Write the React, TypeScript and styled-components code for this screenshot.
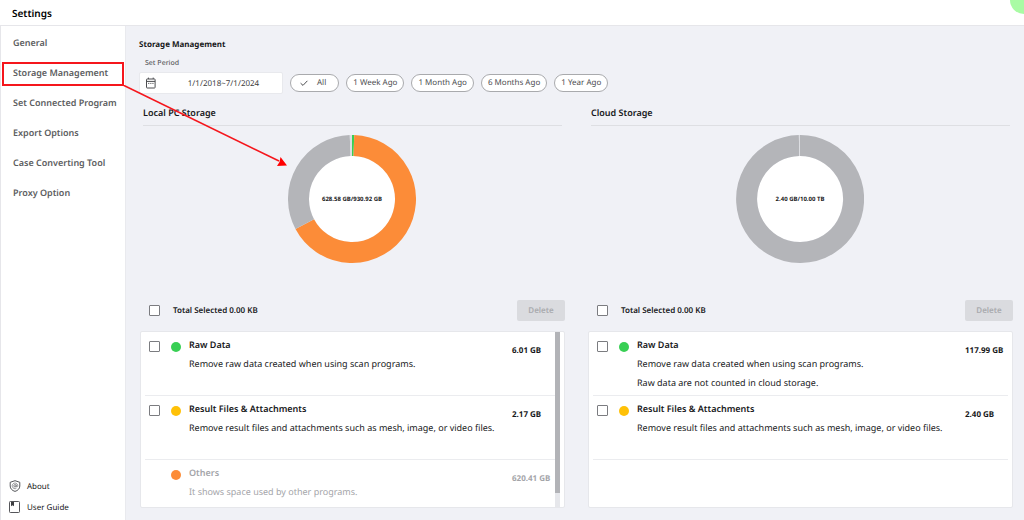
import React from "react";
import styled, { createGlobalStyle, css } from "styled-components";

const GlobalStyle = createGlobalStyle`
  *, *::before, *::after { box-sizing: border-box; }
  body {
    margin: 0;
    background: #f0f1f6;
    color: #17181a;
    font-family: "Noto Sans", sans-serif;
    font-size: 8px;
    text-rendering: geometricPrecision;
  }
  button, input { font: inherit; color: inherit; text-rendering: inherit; }
  h1, h2, h3, p, ul { margin: 0; padding: 0; }
`;

const Page = styled.div`
  min-height: 100vh;
  display: flex;
  flex-direction: column;
  position: relative;
  overflow: hidden;
`;

const Header = styled.header`
  height: 26px;
  padding: 0 12px;
  display: flex;
  align-items: center;
  background: #fff;
  border-bottom: 1px solid #e6e6ea;
`;

const PageTitle = styled.h1`
  font-size: 10px;
  line-height: 16px;
  font-weight: 600;
  color: #000;
`;

const Bubble = styled.span`
  position: absolute;
  top: -14px;
  right: -14px;
  width: 28px;
  height: 28px;
  border-radius: 50%;
  background: #a9fba4;
`;

const Body = styled.div`
  flex: 1;
  display: flex;
`;

const Sidebar = styled.aside`
  flex: 0 0 126px;
  display: flex;
  flex-direction: column;
  justify-content: space-between;
  padding: 2px 0;
  background: #fff;
  border-left: 1px solid #e6e6ea;
  border-right: 1px solid #e9eaee;
`;

const NavList = styled.ul`
  list-style: none;
`;

const NavItem = styled.li`
  position: relative;
  height: 30px;
  display: flex;
  align-items: center;
  padding-left: 12px;
`;

const NavLink = styled.a`
  font-size: 9px;
  line-height: 16px;
  font-weight: 600;
  color: #5c5d60;
  text-decoration: none;
  white-space: nowrap;
`;

const Marker = styled.span`
  position: absolute;
  z-index: 2;
  top: 4px;
  left: 1px;
  right: 1px;
  height: 24px;
  border: 2px solid #f5161c;
`;

const Pointer = styled.svg`
  position: absolute;
  z-index: 3;
  top: 27px;
  left: 121px;
  width: 168px;
  height: 86px;
  pointer-events: none;
`;

const FooterList = styled.ul`
  list-style: none;
  display: flex;
  flex-direction: column;
  gap: 5px;
  padding: 0 0 3px 8px;
`;

const FooterLink = styled.a`
  display: flex;
  align-items: center;
  gap: 6px;
  height: 16px;
  font-size: 8px;
  font-weight: 400;
  color: #17181a;
  text-decoration: none;

  svg { width: 12px; height: 12px; }
`;

const Main = styled.main`
  flex: 1;
  min-width: 0;
  display: flex;
  flex-direction: column;
  padding: 11px 11px 12px 13px;
`;

const SectionTitle = styled.h2`
  font-size: 8px;
  line-height: 16px;
  font-weight: 700;
`;

const PeriodLabel = styled.label`
  margin-top: 5px;
  padding-left: 6px;
  font-size: 7px;
  line-height: 12px;
  font-weight: 500;
  color: #5c5d60;
`;

const PeriodRow = styled.div`
  margin-top: 2px;
  display: flex;
  align-items: center;
  gap: 7px;
`;

const DateField = styled.div`
  width: 144px;
  height: 22px;
  display: flex;
  align-items: center;
  padding-left: 5px;
  background: #fff;
  border: 1px solid #e8e9ed;
  border-radius: 2px;

  svg { flex: none; width: 12px; height: 12px; }
`;

const DateInput = styled.input`
  flex: 1;
  min-width: 0;
  height: 16px;
  padding: 0 0 0 8px;
  border: 0;
  outline: 0;
  background: transparent;
  text-align: center;
  font-size: 8px;
  color: #3c3d40;
`;

const Chip = styled.button`
  height: 18px;
  display: inline-flex;
  align-items: center;
  gap: 8px;
  padding: 0 6px;
  background: #fff;
  border: 1px solid #a9aaad;
  border-radius: 9px;
  font-size: 8px;
  line-height: 16px;
  color: #4c4d50;
  white-space: nowrap;

  &[aria-pressed="true"] { padding: 0 12px 0 8px; }
  svg { width: 10px; height: 10px; }
`;

const Columns = styled.div`
  flex: 1;
  display: grid;
  grid-template-columns: 1fr 1fr;
  gap: 23px;
  margin-top: 10px;
  padding-left: 1px;
`;

const Column = styled.section`
  min-width: 0;
  display: flex;
  flex-direction: column;
`;

const StorageTitle = styled.h3`
  margin: 0 3px;
  padding-bottom: 4px;
  border-bottom: 1px solid #dedfe3;
  font-size: 9px;
  line-height: 17px;
  font-weight: 600;
`;

const Donut = styled.svg`
  align-self: center;
  width: 128px;
  height: 128px;
  margin: 9px 2px 0 0;

  text {
    font-size: 6px;
    font-weight: 700;
    text-anchor: middle;
    fill: #17181a;
  }
`;

const Actions = styled.div`
  margin-top: 37px;
  display: flex;
  align-items: center;
  justify-content: space-between;
  padding-left: 9px;
`;

const SelectAll = styled.label`
  display: flex;
  align-items: center;
  gap: 13px;
  font-size: 8px;
  line-height: 16px;
  font-weight: 600;
`;

const Checkbox = styled.input.attrs({ type: "checkbox" })`
  appearance: none;
  flex: none;
  width: 11px;
  height: 11px;
  margin: 0;
  background: #fff;
  border: 1px solid #7b7c80;
  border-radius: 1px;

  &:checked { background: #7b7c80; }
`;

const DeleteButton = styled.button`
  width: 48px;
  height: 21px;
  padding: 0;
  border: 0;
  border-radius: 2px;
  background: #dadbdf;
  font-size: 8px;
  font-weight: 600;
  color: #a9aaae;
`;

const Card = styled.div`
  flex: 1;
  margin-top: 10px;
  display: flex;
  padding: 0 4px;
  background: #fff;
  border: 1px solid #e6e7eb;
  border-radius: 2px;
`;

const Rows = styled.ul`
  flex: 1;
  min-width: 0;
  list-style: none;
`;

const Row = styled.li<{ $muted?: boolean }>`
  display: grid;
  grid-template-columns: 11px 10px 1fr 43px;
  column-gap: 11px;
  align-items: start;
  min-height: 64px;
  padding: 3px 0 0 4px;
  border-bottom: 1px solid #ebecef;

  ${(p) =>
    p.$muted &&
    css`
      min-height: 47px;
      border-bottom: 0;
      color: #a4a5a9;
    `}
`;

const RowCheck = styled(Checkbox)`
  margin-top: 6px;
`;

const Dot = styled.span<{ $color: string }>`
  grid-column: 2;
  width: 10px;
  height: 10px;
  margin-top: 7px;
  border-radius: 50%;
  background: ${(p) => p.$color};
`;

const RowText = styled.div`
  margin-left: -3px;
  line-height: 19px;
  white-space: nowrap;
`;

const RowTitle = styled.label`
  display: block;
  font-size: 9px;
  font-weight: 600;
`;

const RowLine = styled.p`
  font-size: 9px;
`;

const Size = styled.span`
  padding-top: 6px;
  font-size: 8px;
  line-height: 19px;
  font-weight: 700;
  white-space: nowrap;
`;

const ScrollTrack = styled.div`
  flex: none;
  width: 5px;
  background: #e6e7eb;
`;

const ScrollThumb = styled.div`
  height: 92%;
  background: #b2b3b7;
`;

type Slice = { color: string; from: number; to: number };
type Item = { title: string; lines: string[]; size: string; color: string; muted?: boolean };
type Storage = { id: string; title: string; usage: string; slices: Slice[]; items: Item[]; scroll?: boolean };

const GREEN = "#38cf54";
const YELLOW = "#ffc107";
const ORANGE = "#fc8c38";
const GRAY = "#b4b5b9";
const LIGHT = "#dcdde1";

const storages: Storage[] = [
  {
    id: "local",
    title: "Local PC Storage",
    usage: "628.58 GB/930.92 GB",
    scroll: true,
    slices: [
      { color: GREEN, from: 0, to: 2 },
      { color: ORANGE, from: 2, to: 242 },
      { color: GRAY, from: 242, to: 358 },
      { color: LIGHT, from: 358, to: 360 },
    ],
    items: [
      { title: "Raw Data", lines: ["Remove raw data created when using scan programs."], size: "6.01 GB", color: GREEN },
      {
        title: "Result Files & Attachments",
        lines: ["Remove result files and attachments such as mesh, image, or video files."],
        size: "2.17 GB",
        color: YELLOW,
      },
      { title: "Others", lines: ["It shows space used by other programs."], size: "620.41 GB", color: ORANGE, muted: true },
    ],
  },
  {
    id: "cloud",
    title: "Cloud Storage",
    usage: "2.40 GB/10.00 TB",
    slices: [
      { color: GRAY, from: 0, to: 359 },
      { color: LIGHT, from: 359, to: 360 },
    ],
    items: [
      {
        title: "Raw Data",
        lines: ["Remove raw data created when using scan programs.", "Raw data are not counted in cloud storage."],
        size: "117.99 GB",
        color: GREEN,
      },
      {
        title: "Result Files & Attachments",
        lines: ["Remove result files and attachments such as mesh, image, or video files."],
        size: "2.40 GB",
        color: YELLOW,
      },
    ],
  },
];

const navItems = [
  "General",
  "Storage Management",
  "Set Connected Program",
  "Export Options",
  "Case Converting Tool",
  "Proxy Option",
];

const periods = ["1 Week Ago", "1 Month Ago", "6 Months Ago", "1 Year Ago"];

function arc({ from, to }: Slice) {
  const r = 53.5;
  const point = (deg: number) => {
    const a = ((deg - 90) * Math.PI) / 180;
    return `${(64 + r * Math.cos(a)).toFixed(2)} ${(64 + r * Math.sin(a)).toFixed(2)}`;
  };
  return `M${point(from)} A${r} ${r} 0 ${to - from > 180 ? 1 : 0} 1 ${point(to)}`;
}

function StorageColumn({ storage }: { storage: Storage }) {
  return (
    <Column>
      <StorageTitle>{storage.title}</StorageTitle>
      <Donut viewBox="0 0 128 128" role="img" aria-label={storage.usage}>
        <circle cx="64" cy="64" r="43" fill="#fff" />
        {storage.slices.map((s) => (
          <path key={s.from} d={arc(s)} fill="none" stroke={s.color} strokeWidth="21" />
        ))}
        <text x="64" y="66">{storage.usage}</text>
      </Donut>
      <Actions>
        <SelectAll>
          <Checkbox />
          Total Selected 0.00 KB
        </SelectAll>
        <DeleteButton type="button" disabled>Delete</DeleteButton>
      </Actions>
      <Card>
        <Rows>
          {storage.items.map((item, i) => {
            const id = `${storage.id}-${i}`;
            return (
              <Row key={id} $muted={item.muted}>
                {!item.muted && <RowCheck id={id} />}
                <Dot $color={item.color} />
                <RowText>
                  <RowTitle as={item.muted ? "span" : "label"} htmlFor={item.muted ? undefined : id}>
                    {item.title}
                  </RowTitle>
                  {item.lines.map((line) => (
                    <RowLine key={line}>{line}</RowLine>
                  ))}
                </RowText>
                <Size>{item.size}</Size>
              </Row>
            );
          })}
        </Rows>
        {storage.scroll && (
          <ScrollTrack>
            <ScrollThumb />
          </ScrollTrack>
        )}
      </Card>
    </Column>
  );
}

export default function App() {
  return (
    <Page>
      <GlobalStyle />
      <Header>
        <PageTitle>Settings</PageTitle>
      </Header>
      <Bubble />
      <Body>
        <Sidebar>
          <nav>
            <NavList>
              {navItems.map((name) => (
                <NavItem key={name}>
                  <NavLink href="#">{name}</NavLink>
                  {name === "Storage Management" && (
                    <>
                      <Marker />
                      <Pointer viewBox="0 0 168 86" aria-hidden="true">
                        <path d="M1 0 L157 76" stroke="#f5161c" strokeWidth="1.6" fill="none" />
                        <path d="M165 80.5 L155 81 L157.5 77 L158.5 72 Z" fill="#ff0000" />
                      </Pointer>
                    </>
                  )}
                </NavItem>
              ))}
            </NavList>
          </nav>
          <FooterList>
            <li>
              <FooterLink href="#">
                <svg viewBox="0 0 12 12" fill="none" stroke="#55565a" strokeWidth="1" aria-hidden="true">
                  <path d="M6 .7 L10.8 2.3 V6 C10.8 8.7 8.8 10.6 6 11.4 C3.2 10.6 1.2 8.7 1.2 6 V2.3 Z" />
                  <circle cx="6" cy="5.8" r="1.2" strokeWidth=".7" />
                  <path d="M7.2 4.6 V6.3 C7.2 7.3 8.8 7.2 8.8 5.8 A2.8 2.8 0 1 0 7.4 8.3" strokeWidth=".6" />
                </svg>
                About
              </FooterLink>
            </li>
            <li>
              <FooterLink href="#">
                <svg viewBox="0 0 12 12" fill="none" stroke="#55565a" strokeWidth="1" aria-hidden="true">
                  <rect x=".5" y=".5" width="10" height="11" rx=".8" />
                  <path d="M2 1 H5 V5.2 L3.5 4.2 L2 5.2 Z" fill="#3c3d40" stroke="none" />
                </svg>
                User Guide
              </FooterLink>
            </li>
          </FooterList>
        </Sidebar>
        <Main>
          <SectionTitle>Storage Management</SectionTitle>
          <PeriodLabel htmlFor="period">Set Period</PeriodLabel>
          <PeriodRow>
            <DateField>
              <svg viewBox="0 0 12 12" fill="none" stroke="#4c4d50" aria-hidden="true">
                <rect x="1.5" y="2" width="8.6" height="9" rx=".6" />
                <path d="M1.5 4.4 H10.1 M3.4 .6 V2 M8.2 .6 V2" />
                <path d="M3.2 6.4 H4.3 M5.3 6.4 H6.4 M7.4 6.4 H8.5" />
              </svg>
              <DateInput id="period" type="text" defaultValue="1/1/2018~7/1/2024" />
            </DateField>
            <Chip type="button" aria-pressed="true">
              <svg viewBox="0 0 10 10" fill="none" stroke="#4c4d50" aria-hidden="true">
                <path d="M1.6 5.2 L4 7.4 L8.4 2.8" />
              </svg>
              All
            </Chip>
            {periods.map((p) => (
              <Chip key={p} type="button" aria-pressed="false">{p}</Chip>
            ))}
          </PeriodRow>
          <Columns>
            {storages.map((s) => (
              <StorageColumn key={s.id} storage={s} />
            ))}
          </Columns>
        </Main>
      </Body>
    </Page>
  );
}
